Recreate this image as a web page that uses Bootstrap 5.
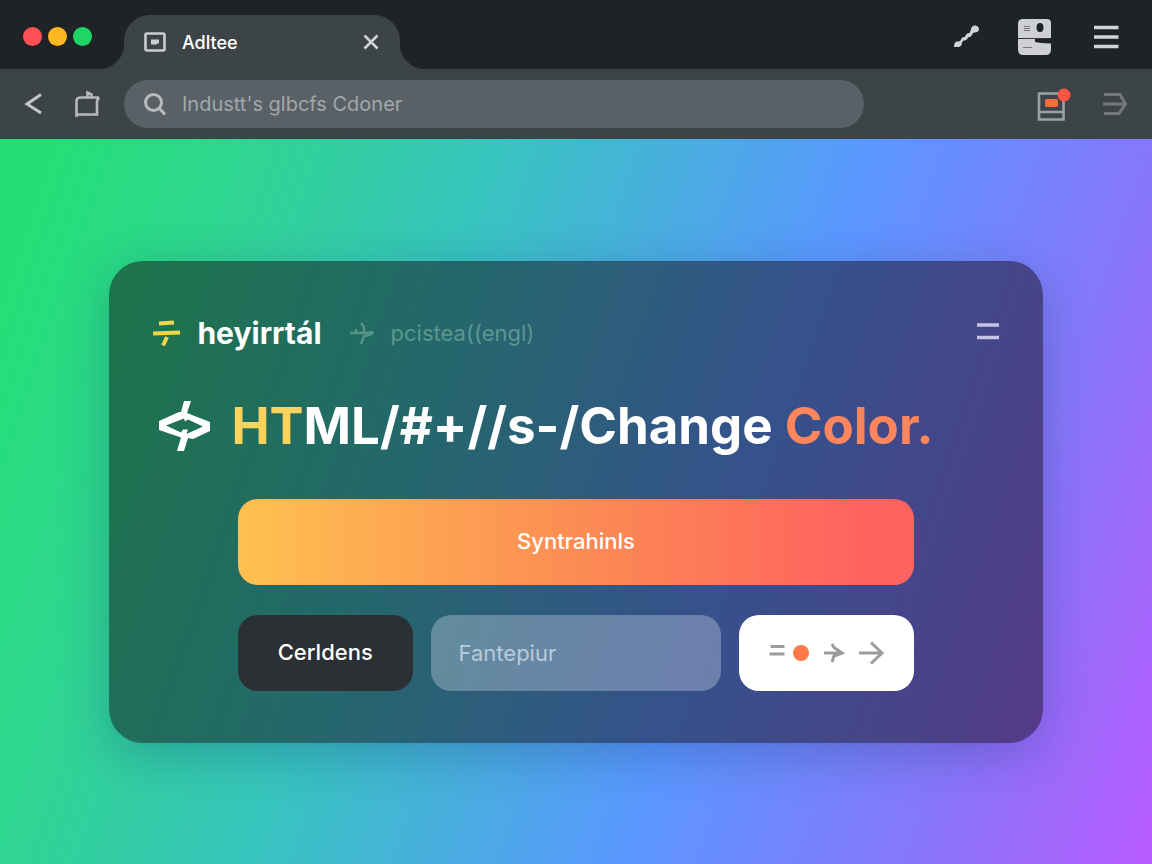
<!DOCTYPE html>
<html lang="en">
<head>
<meta charset="utf-8">
<meta name="viewport" content="width=device-width, initial-scale=1">
<title>Adltee</title>
<link rel="stylesheet" href="https://cdn.jsdelivr.net/npm/bootstrap@5.3.0/dist/css/bootstrap.min.css">
<style>
  :root { --bar: #3d4448; --frame: #1f2326; }
  body { font-family: Inter, "Liberation Sans", sans-serif; font-size: 22px; background: var(--frame); }
  svg { display: block; flex: none; }
  .bare { background: none; border: 0; padding: 0; }
  .tab-strip { height: 69px; background: var(--frame); padding: 0 32px 0 23px; }
  .lights { gap: 6px; }
  .light { width: 19px; height: 19px; border-radius: 50%; }
  .light-red { background: #ff5056; }
  .light-amber { background: #ffb722; }
  .light-green { background: #1fd565; }
  .page-tab { position: relative; width: 276px; height: 54px; margin-left: 32px; padding: 0 20px; background: var(--bar); border-radius: 26px 26px 0 0; color: #fff; font-size: 18px; font-weight: 500; }
  .page-tab::before, .page-tab::after { content: ""; position: absolute; bottom: 0; width: 26px; height: 26px; }
  .page-tab::before { right: 100%; background: radial-gradient(circle at 0 0, transparent 26px, var(--bar) 27px); }
  .page-tab::after { left: 100%; background: radial-gradient(circle at 100% 0, transparent 26px, var(--bar) 27px); }
  .strip-tools { gap: 36px; }
  .tool-bar { height: 70px; background: var(--bar); padding: 0 24px; }
  .nav-tools { gap: 30px; }
  .address { width: 67%; height: 48px; padding: 0 20px; border-radius: 24px; background: #596167; margin: 0 auto 0 24px; }
  .address input { width: 100%; font-size: 20px; color: #a0a7ac; outline: 0; }
  .address input::placeholder { color: #a0a7ac; opacity: 1; }
  .stage { background: linear-gradient(109deg, #24df76 4%, #2fd591 18%, #38c4c0 36%, #5a98ff 62%, #8578fa 82%, #b45cfc 99%); }
  .panel { width: 81%; padding: 52px 44px; border-radius: 34px; background: rgba(14, 4, 14, .48); box-shadow: 0 12px 48px rgba(10, 30, 90, .24); }
  .panel-head { height: 40px; margin-bottom: 40px; }
  .brand-name { color: #fff; font-size: 30px; font-weight: 700; line-height: 40px; text-decoration: none; }
  .crumb-mark { margin: 0 16px 0 28px; }
  .crumb { color: #5c978f; font-size: 22px; line-height: 40px; text-decoration: none; }
  .headline { font-size: 51px; line-height: 66px; font-weight: 700; color: #fff; margin-bottom: 40px; gap: 20px; white-space: nowrap; }
  .sun { color: #fad25e; }
  .coral { color: #ff865c; }
  .actions { width: 80%; row-gap: 30px; }
  .cta { height: 86px; border: 0; border-radius: 20px; color: #fff; font-size: 22px; font-weight: 500; background: linear-gradient(90deg, #ffc150, #fc8a54 52%, #ff635f 92%); }
  .trio { display: grid; grid-template-columns: 3fr 5fr 3fr; gap: 18px; }
  .tile { height: 76px; border: 0; border-radius: 20px; font-size: 22px; }
  .tile-dark { background: #2b3034; color: #fff; font-weight: 500; }
  .tile-field { min-width: 0; padding: 0 28px; background: rgba(200, 212, 230, .37); color: #fff; }
  .tile-field::placeholder { color: #b8cbda; opacity: 1; }
  .tile-white { background: #fff; }
</style>
</head>
<body>
<div class="d-flex flex-column min-vh-100">
  <header>
    <div class="tab-strip d-flex align-items-center">
      <div class="lights d-flex mt-1">
        <span class="light light-red"></span>
        <span class="light light-amber"></span>
        <span class="light light-green"></span>
      </div>
      <div class="page-tab d-flex align-items-center align-self-end">
        <svg width="22" height="20" viewBox="0 0 22 20" fill="none" stroke="#c9ced1" stroke-width="2.6"><rect x="1.500" y="1.500" width="19" height="17" rx="1.500"/><path fill="#c9ced1" stroke="none" d="M7 7.500h8v4h-1.500l-1 1H7z"/></svg>
        <span class="ms-3">Adltee</span>
        <button class="bare ms-auto" aria-label="Close tab"><svg width="18" height="18" viewBox="0 0 18 18" stroke="#d0d3d5" stroke-width="2.6"><path d="M2.500 2.500l13 13M15.500 2.500l-13 13"/></svg></button>
      </div>
      <div class="strip-tools d-flex align-items-center ms-auto mt-1">
        <button class="bare" aria-label="Connect"><svg width="28" height="28" viewBox="0 0 28 28" fill="#d2d3d6"><path d="M0 24q0-6 4-5.500 2.500 0 3-2 .5-3 4-2.500 1-4 4.500-4 1-1.500 1.500-4Q18 2 21.500 2.500q4 1 3.500 4.500-1.500 3-5 2.500-1.500 0-2 2.500-1 2-4 2.500-1 3-4 3-1 0-2 2 0 3.500-3 4.500z"/></svg></button>
        <button class="bare" aria-label="Profile"><svg width="34" height="36" viewBox="0 0 34 36"><path fill="#cfd0d3" d="M5 0h24q4 0 4 4v15H0V5q0-5 5-5zM0 20h17v3q7 1.500 16 0v7q0 6-5 6H5q-5 0-5-6z"/><path stroke="#75797c" d="M6 7.500h6M6 9.500h6M6 11.500h6M5 28.500h9"/><ellipse cx="22" cy="8.500" rx="3.500" ry="4.500" fill="#1f2326"/><path stroke="#33373a" d="M0 19.500h33"/><path fill="#1f2326" d="M17 20.500h6l3 1.500h8v2.500q-8 0-15-1.500-3-1-2-2.500z"/></svg></button>
        <button class="bare" aria-label="Menu"><svg width="32" height="26" viewBox="0 0 32 26" stroke="#d2d3d6" stroke-width="3.500"><path d="M6 3.500h24.500M6 13h24.500M6 22.500h24.500"/></svg></button>
      </div>
    </div>
    <div class="tool-bar d-flex align-items-center">
      <div class="nav-tools d-flex align-items-center">
        <button class="bare" aria-label="Back"><svg width="20" height="22" viewBox="0 0 20 22" fill="none" stroke="#c2c7ca" stroke-width="3"><path d="M17 1.500L3 11l14 9"/></svg></button>
        <button class="bare" aria-label="Bookmark"><svg width="26" height="28" viewBox="0 0 26 28" fill="none" stroke="#b5babd" stroke-width="2.600"><path d="M2.500 27V11Q2.500 7.500 7 7.500h18M2.500 24.500h20.500V11l2-3.500M13.500 8V2.500l4 2V8"/></svg></button>
      </div>
      <div class="address d-flex align-items-center">
        <svg width="22" height="24" viewBox="0 0 22 24" fill="none" stroke="#b4babe" stroke-width="3"><circle cx="9.500" cy="10.500" r="8"/><path d="M15.500 16.500l5.500 6"/></svg>
        <input class="bare ms-3" type="text" aria-label="Address" placeholder="Industt's glbcfs Cdoner">
      </div>
      <div class="nav-tools d-flex align-items-center">
        <button class="bare" aria-label="Notifications"><svg width="36" height="36" viewBox="0 0 36 36" fill="none" stroke="#9ba2a6" stroke-width="2.600"><path d="M3 7.500H27.500V33.500H3zM3 26h24.500"/><rect x="9" y="13" width="13" height="8" rx="2" fill="#ff6a3b" stroke="none"/><circle cx="28" cy="9" r="6.500" fill="#ff5542" stroke="none"/></svg></button>
        <button class="bare" aria-label="Forward"><svg width="26" height="24" viewBox="0 0 26 24" fill="none" stroke="#73797d" stroke-width="3"><path d="M2 2.500h16L23.500 12l-6.500 9.500H2M1 12h22"/></svg></button>
      </div>
    </div>
  </header>

  <main class="stage flex-grow-1 d-flex align-items-center justify-content-center">
    <section class="panel">
      <div class="panel-head d-flex align-items-center">
        <svg width="28" height="28" viewBox="0 0 28 28" stroke="#f1d64c" stroke-width="4"><path d="M6 4.500l15-1M0 14.500l27-1M14 18l-4 8.500"/></svg>
        <a class="brand-name ms-3" href="#">heyirrtál</a>
        <svg class="crumb-mark" width="25" height="24" viewBox="0 0 25 24" fill="none" stroke="#559486" stroke-width="2.500"><path d="M0 12h16l7-1M6 8v4M11 2l3 4v6M23 11q0 3-9 4l-3 8"/></svg>
        <a class="crumb" href="#">pcistea((engl)</a>
        <button class="bare ms-auto" aria-label="Panel menu"><svg width="22" height="20" viewBox="0 0 22 20" stroke="#c7c3e6" stroke-width="3.500"><path d="M0 2h22M0 14.500h22"/></svg></button>
      </div>
      <h1 class="headline d-flex align-items-center">
        <svg class="ms-1" width="54" height="52" viewBox="0 0 54 52" fill="#fff"><path fill-rule="evenodd" d="M27 1h7l-4 12 23 9v9L36 39l-5-1-4 13h-7l4-13.500L2 30v-9l20-9h2zM27 18.500L9 25.500 24 32.500l2-3h5l-1.500 4.500L46 26.500 31 19.500l-3 2z"/></svg>
        <span><span class="sun">HT</span>ML/#+//s-/Change <span class="coral">Color.</span></span>
      </h1>
      <div class="actions d-grid mx-auto">
        <button class="cta">Syntrahinls</button>
        <div class="trio">
          <button class="tile tile-dark">Cerldens</button>
          <input class="tile tile-field" type="text" aria-label="Fantepiur" placeholder="Fantepiur">
          <button class="tile tile-white d-flex align-items-center justify-content-center" aria-label="Next color">
            <svg width="116" height="26" viewBox="0 0 116 26" fill="none" stroke="#9c9c9c" stroke-width="3"><path d="M1.500 6.500h14M.5 14h15M55 13h18M63 4l2 3.500 8 5.500-8 3-2 6M90 13h23M102 2.500L113 13l-11 10.500"/><circle cx="32" cy="13" r="8" fill="#ff7a47" stroke="none"/></svg>
          </button>
        </div>
      </div>
    </section>
  </main>
</div>
<script src="https://cdn.jsdelivr.net/npm/bootstrap@5.3.0/dist/js/bootstrap.bundle.min.js"></script>
</body>
</html>
